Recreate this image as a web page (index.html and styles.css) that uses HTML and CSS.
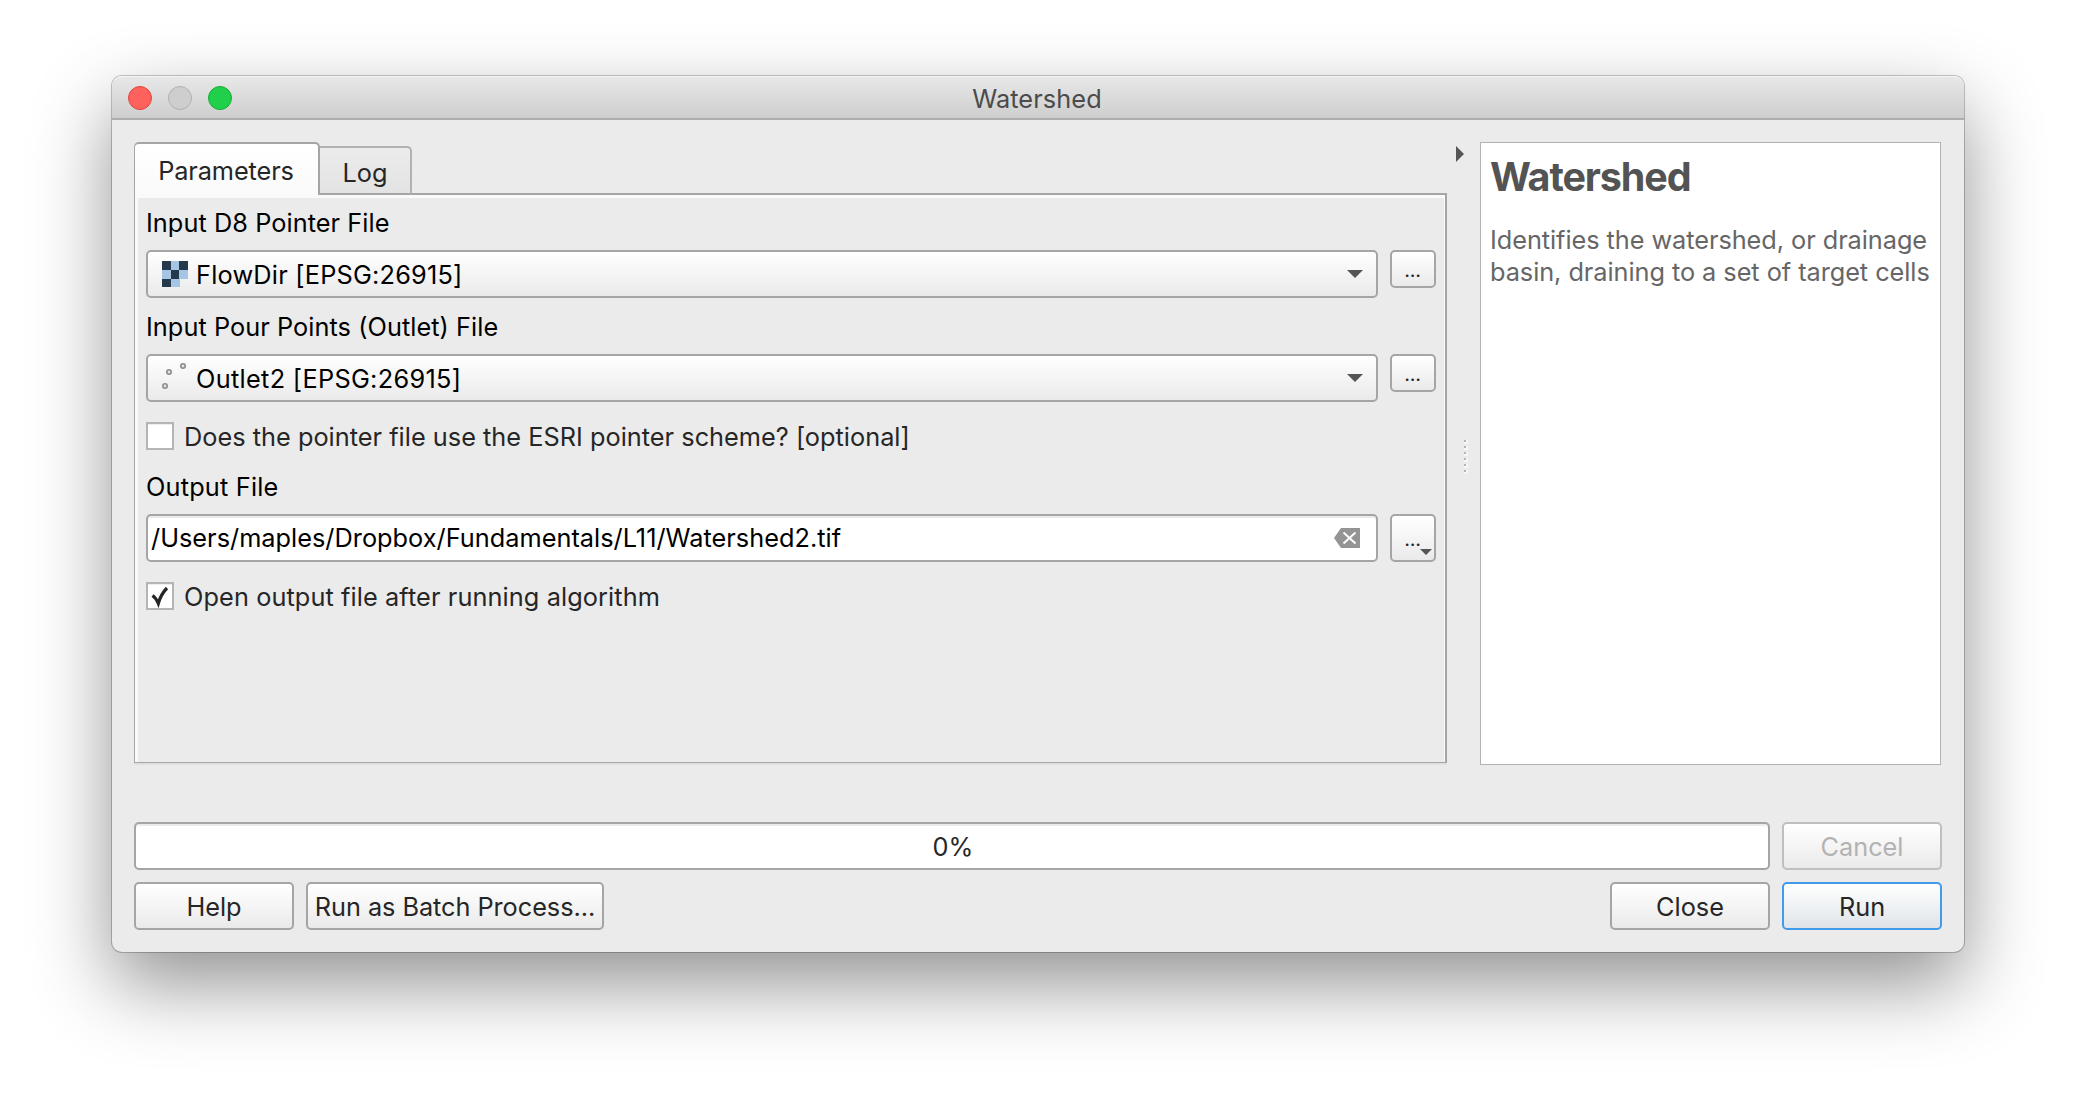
FILE: index.html
```html
<!DOCTYPE html>
<html lang="en">
<head>
<meta charset="utf-8">
<title>Watershed</title>
<link rel="stylesheet" href="styles.css">
</head>
<body>
<div class="window">
  <header class="titlebar">
    <div class="lights"><span class="light close"></span><span class="light minimize"></span><span class="light zoom"></span></div>
    <span class="title">Watershed</span>
  </header>
  <main class="content">
    <div class="upper">
      <section class="tabs">
        <div class="tab-row">
          <div class="tab active">Parameters</div>
          <div class="tab">Log</div>
        </div>
        <div class="pane">
          <label class="label">Input D8 Pointer File</label>
          <div class="row">
            <div class="field combo">
              <svg class="icon" width="26" height="26" viewBox="0 0 26 26" shape-rendering="crispEdges"><path fill="#a6c5e4" d="M0 0h26v18h-8v8H0z"/><path fill="#25394d" d="M0 0h9v9H0zM17 0h9v9h-9zM9 9h8v9H9zM0 18h9v8H0z"/></svg>
              <span class="value layer">FlowDir [EPSG:26915]</span>
              <svg class="arrow" width="16" height="8" viewBox="0 0 16 8"><path fill="#555" d="M0 0h16L8 8z"/></svg>
            </div>
            <button class="more">...</button>
          </div>
          <label class="label">Input Pour Points (Outlet) File</label>
          <div class="row">
            <div class="field combo">
              <svg class="icon" width="26" height="26" viewBox="0 0 26 26" fill="#e4e4e4" stroke="#8b8b8b" stroke-width="1.6"><circle cx="3" cy="21" r="2.2"/><circle cx="7" cy="7" r="2.2"/><circle cx="21" cy="1" r="2.2"/></svg>
              <span class="value layer outlet">Outlet2 [EPSG:26915]</span>
              <svg class="arrow" width="16" height="8" viewBox="0 0 16 8"><path fill="#555" d="M0 0h16L8 8z"/></svg>
            </div>
            <button class="more">...</button>
          </div>
          <div class="check-row"><span class="box"></span><span class="check-text">Does the pointer file use the ESRI pointer scheme? [optional]</span></div>
          <label class="label output">Output File</label>
          <div class="row">
            <div class="field input">
              <span class="value">/Users/maples/Dropbox/Fundamentals/L11/Watershed2.tif</span>
              <svg class="clear" width="26" height="20" viewBox="0 0 26 20"><path fill="#949494" d="M0 10L7 0h19v20H7z"/><path stroke="#fff" stroke-width="2" fill="none" d="M9.5 4.5l12 11M21.5 4.5l-12 11"/></svg>
            </div>
            <button class="more tall">...<svg class="corner" width="12" height="6" viewBox="0 0 12 6"><path fill="#555" d="M0 0h12L6 6z"/></svg></button>
          </div>
          <div class="check-row"><span class="box"><svg width="28" height="28" viewBox="0 0 28 28"><path fill="none" stroke="#262626" stroke-width="3.2" d="M6.5 13.5Q10 16 12.3 21.5Q15 12 21 6"/></svg></span><span class="check-text open">Open output file after running algorithm</span></div>
        </div>
      </section>
      <div class="splitter">
        <svg class="collapse" width="8" height="16" viewBox="0 0 8 16"><path fill="#555" d="M0 0l8 8-8 8z"/></svg>
        <svg class="grip" width="4" height="34" viewBox="0 0 4 34" shape-rendering="crispEdges"><path stroke="#f6f6f6" stroke-width="4" stroke-dasharray="4 2" d="M2 0v34"/><path stroke="#b5b5b5" stroke-width="2" stroke-dasharray="2 4" d="M1 0v34"/></svg>
      </div>
      <aside class="help">
        <h1>Watershed</h1>
        <p>Identifies the watershed, or drainage<br>basin, draining to a set of target cells</p>
      </aside>
    </div>
    <footer class="lower">
      <div class="bar"><div class="progress">0%</div><button class="btn disabled">Cancel</button></div>
      <div class="bar"><button class="btn">Help</button><button class="btn batch">Run as Batch Process...</button><span class="spring"></span><button class="btn">Close</button><button class="btn primary">Run</button></div>
    </footer>
  </main>
</div>
</body>
</html>
```
FILE: styles.css
```css
* { box-sizing: border-box; }
body {
  margin: 0;
  height: 1100px;
  padding: 76px 112px 148px;
  overflow: hidden;
  background: #fff;
  font: 25.3px/32px Inter, "Liberation Sans", sans-serif;
  letter-spacing: 0;
  color: #262626;
  white-space: nowrap;
}
button { font: inherit; letter-spacing: inherit; color: inherit; padding: 0; }
.window {
  height: 876px;
  border-radius: 10px;
  background: #ebebeb;
  box-shadow: 0 0 0 1px rgba(0,0,0,.22), 0 32px 78px rgba(0,0,0,.43);
}
.titlebar {
  position: relative;
  display: flex;
  align-items: center;
  justify-content: center;
  height: 44px;
  border-bottom: 2px solid #adadad;
  border-radius: 10px 10px 0 0;
  background: linear-gradient(#e8e8e8, #cecece);
  box-shadow: inset 0 1px #f5f5f5;
  color: #4b4b4b;
}
.lights { position: absolute; left: 16px; top: 10px; display: flex; gap: 16px; }
.light { width: 24px; height: 24px; border-radius: 50%; border: 1px solid #e2463f; background: #ff625c; }
.light.minimize { background: #cecece; border-color: #b0b0b0; }
.light.zoom { background: #20d04a; border-color: #16ad33; }
.title { padding: 4px 2px 0 0; letter-spacing: 0.1px; }

.content { padding: 22px 22px 0; }
.upper { display: flex; height: 623px; }
.tabs { width: 1313px; height: 621px; display: flex; flex-direction: column; }
.tab-row { display: flex; align-items: flex-end; height: 53px; margin-bottom: -2px; position: relative; }
.tab {
  width: 92px;
  height: 49px;
  padding-top: 9px;
  border: 2px solid #b2b2b2;
  border-left: 0;
  border-bottom-color: #a5a5a5;
  border-radius: 0 5px 0 0;
  background: linear-gradient(#ececec, #e3e3e3);
  text-align: center;
}
.tab.active {
  width: 186px;
  height: 53px;
  padding: 11px 1px 0 0;
  border: 2px solid #a5a5a5;
  border-left-width: 1px;
  border-bottom: 0;
  border-radius: 5px 5px 0 0;
  background: linear-gradient(#fff, #fafafa);
  letter-spacing: -0.1px;
}
.pane {
  flex: 1;
  padding: 11px 9px 0 11px;
  border: 2px solid #a5a5a5;
  border-left-width: 1px;
  border-bottom-width: 1px;
  box-shadow: inset 3px 3px #fafafa, inset -1px 0 #fafafa, 0 2px #e0e0e0;
}
.label { display: block; height: 32px; line-height: 34px; color: #000; margin-bottom: 12px; letter-spacing: 0.06px; }
.label.output { letter-spacing: 0.2px; }
.row { display: flex; gap: 12px; align-items: flex-start; height: 48px; margin-bottom: 12px; }
.field {
  display: flex;
  align-items: center;
  width: 1232px;
  height: 48px;
  border: 2px solid #a5a5a5;
  border-radius: 5px;
  color: #000;
}
.combo, .more, .btn { background: linear-gradient(#fff, #eaeaea); }
.combo { padding: 0 13px 0 14px; }
.value { flex: 1; }
.layer { letter-spacing: 0.22px; padding-top: 2px; }
.layer.outlet { letter-spacing: 0.32px; }
.icon { margin-right: 8px; overflow: visible; }
.input { background: #fff; padding: 0 16px 0 3px; box-shadow: inset 0 2px #ebebeb; }
.input .value { padding-bottom: 1px; letter-spacing: 0.02px; }
.more {
  position: relative;
  width: 46px;
  height: 38px;
  padding: 1px 1px 0 0;
  border: 2px solid #a5a5a5;
  border-radius: 5px;
  font-size: 20px;
  line-height: 32px;
  letter-spacing: -0.3px;
}
.more.tall { height: 48px; padding-top: 2px; }
.corner { position: absolute; right: 2px; bottom: 5px; }
.check-row { display: flex; align-items: center; gap: 10px; height: 28px; margin: 20px 0; }
.check-text { padding-top: 1px; letter-spacing: 0.02px; }
.check-text.open { letter-spacing: 0.1px; }
.box { width: 28px; height: 28px; border: 2px solid #b5b5b5; background: #fff; box-shadow: inset 0 1px #eee; }
.box svg { display: block; margin: -2px; }

.splitter { position: relative; width: 33px; }
.collapse { position: absolute; left: 9px; top: 4px; }
.grip { position: absolute; left: 17px; top: 298px; }
.help { width: 461px; border: 1px solid #b2b2b2; background: #fff; padding: 7px 9px; }
.help h1 { margin: 0 0 20px; font-size: 39.5px; line-height: 54px; font-weight: 700; letter-spacing: -1.1px; color: #535353; }
.help p { margin: 0; color: #666; letter-spacing: -0.05px; }

.lower { display: flex; flex-direction: column; gap: 12px; padding-top: 57px; }
.bar { display: flex; gap: 12px; height: 48px; }
.progress { flex: 1; padding-left: 2px; border: 2px solid #a5a5a5; border-radius: 5px; background: #fff; box-shadow: inset 0 2px #ebebeb; line-height: 45px; text-align: center; color: #262626; }
.btn { width: 160px; height: 48px; padding-top: 1px; border: 2px solid #a5a5a5; border-radius: 5px; }
.batch { width: 298px; letter-spacing: -0.05px; }
.spring { flex: 1; }
.btn.disabled { border-color: #bfbfbf; color: #b3b3b3; }
.btn.primary { border-color: #429aeb; background: linear-gradient(#fff, #dfe4e9); }
```
